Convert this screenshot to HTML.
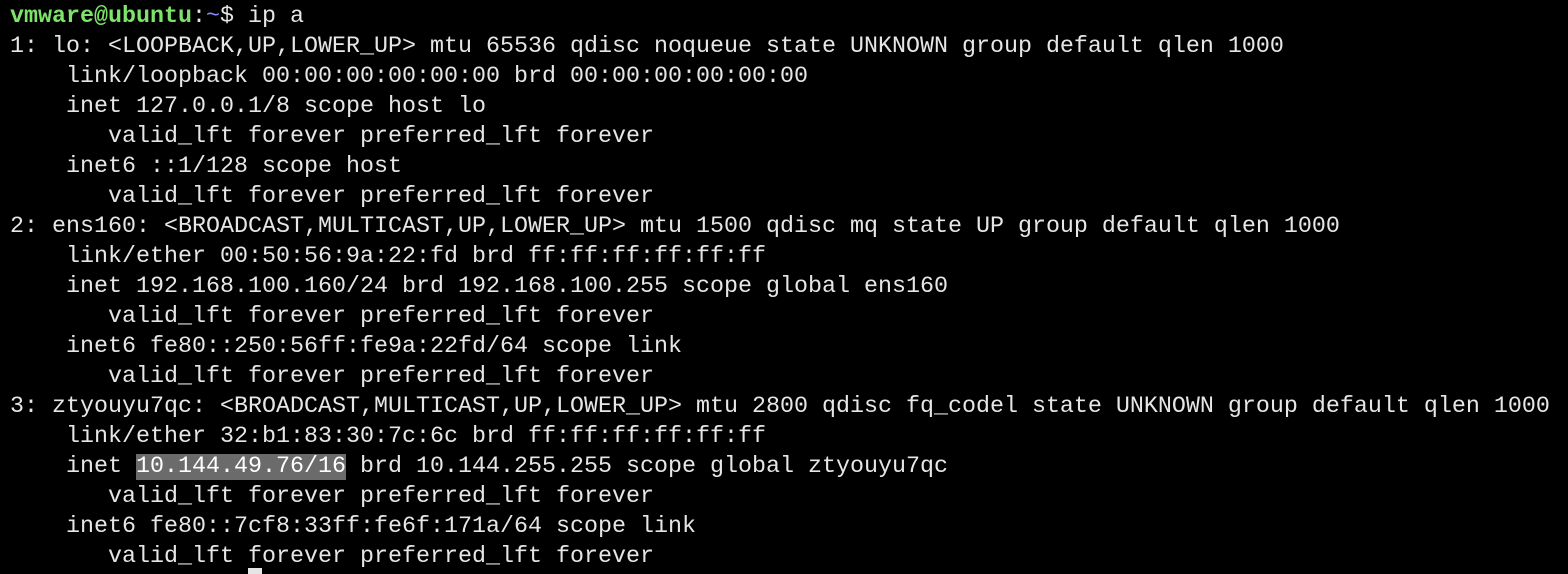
<!DOCTYPE html>
<html><head><style>
html,body{margin:0;padding:0;background:#000;width:1568px;height:574px;overflow:hidden;position:relative}
pre{margin:0;position:absolute;left:10px;top:2px;font-family:"Liberation Mono",monospace;font-size:23.33px;line-height:30px;color:#e6e6e6;white-space:pre}
.g{color:#7ee36a;font-weight:bold}.b{color:#8a8aff}
.h{background:#6b6b6b;color:#fff}
.c{position:absolute;left:248px;top:568px;width:14px;height:30px;background:#e6e6e6}
</style></head><body>
<pre><span class="g">vmware@ubuntu</span>:<span class="b">~</span>$ ip a
1: lo: &lt;LOOPBACK,UP,LOWER_UP&gt; mtu 65536 qdisc noqueue state UNKNOWN group default qlen 1000
    link/loopback 00:00:00:00:00:00 brd 00:00:00:00:00:00
    inet 127.0.0.1/8 scope host lo
       valid_lft forever preferred_lft forever
    inet6 ::1/128 scope host
       valid_lft forever preferred_lft forever
2: ens160: &lt;BROADCAST,MULTICAST,UP,LOWER_UP&gt; mtu 1500 qdisc mq state UP group default qlen 1000
    link/ether 00:50:56:9a:22:fd brd ff:ff:ff:ff:ff:ff
    inet 192.168.100.160/24 brd 192.168.100.255 scope global ens160
       valid_lft forever preferred_lft forever
    inet6 fe80::250:56ff:fe9a:22fd/64 scope link
       valid_lft forever preferred_lft forever
3: ztyouyu7qc: &lt;BROADCAST,MULTICAST,UP,LOWER_UP&gt; mtu 2800 qdisc fq_codel state UNKNOWN group default qlen 1000
    link/ether 32:b1:83:30:7c:6c brd ff:ff:ff:ff:ff:ff
    inet <span class="h">10.144.49.76/16</span> brd 10.144.255.255 scope global ztyouyu7qc
       valid_lft forever preferred_lft forever
    inet6 fe80::7cf8:33ff:fe6f:171a/64 scope link
       valid_lft forever preferred_lft forever</pre>
<div class="c"></div>
</body></html>
